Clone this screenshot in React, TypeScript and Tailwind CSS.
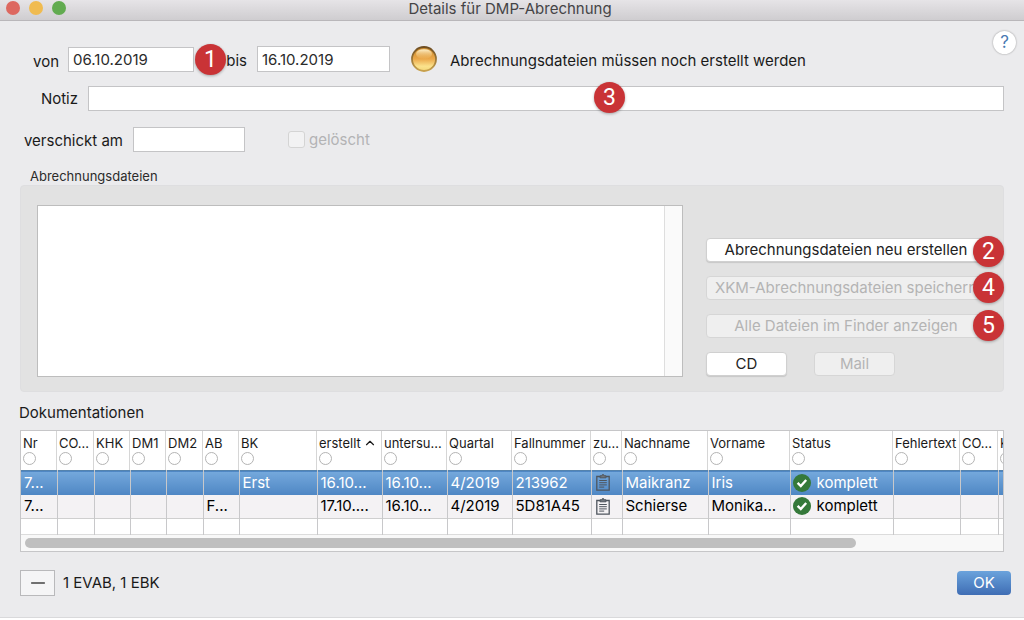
import { ChevronUp, Minus } from "lucide-react";
import clsx from "clsx";

type Column = { label: string; width: string; sorted?: boolean };

const columns: Column[] = [
  { label: "Nr", width: "w-[36px]" },
  { label: "CO...", width: "w-[37px]" },
  { label: "KHK", width: "w-[36px]" },
  { label: "DM1", width: "w-[36px]" },
  { label: "DM2", width: "w-[37px]" },
  { label: "AB", width: "w-[36px]" },
  { label: "BK", width: "w-[78px]" },
  { label: "erstellt", width: "w-[65px]", sorted: true },
  { label: "untersu...", width: "w-[65px]" },
  { label: "Quartal", width: "w-[65px]" },
  { label: "Fallnummer", width: "w-[79px]" },
  { label: "zu...", width: "w-[31px]" },
  { label: "Nachname", width: "w-[86px]" },
  { label: "Vorname", width: "w-[82px]" },
  { label: "Status", width: "w-[103px]" },
  { label: "Fehlertext", width: "w-[67px]" },
  { label: "CO...", width: "w-[38px]" },
  { label: "KHK", width: "w-[36px]" },
];

const rows = [
  ["7...", "", "", "", "", "", "Erst", "16.10...", "16.10...", "4/2019", "213962", "clip", "Maikranz", "Iris", "komplett", "", "", ""],
  ["7...", "", "", "", "", "F...", "", "17.10....", "16.10...", "4/2019", "5D81A45", "clip", "Schierse", "Monika...", "komplett", "", "", ""],
];

function Badge({ children, className }: { children: string; className: string }) {
  return (
    <span
      className={clsx(
        "absolute z-10 flex size-[31px] items-center justify-center rounded-full bg-[#c93336] font-['Roboto',sans-serif] text-[23px] leading-none text-white shadow-[0_1px_3px_rgba(0,0,0,0.3)]",
        className,
      )}
    >
      {children}
    </span>
  );
}

function ClipboardIcon() {
  return (
    <svg viewBox="0 0 14 17" className="ml-px h-[17px] w-[14px]" fill="none" stroke="#4f565e">
      <path d="M4 2.5H.8v13.7h12.4V2.5H10" strokeWidth="1.3" />
      <path d="M4 1.8h1.8a1.2 1.2 0 0 1 2.4 0H10v2H4z" fill="#70767c" />
      <path d="M3.2 6.5h7.6M3.2 8.7h7.6M3.2 10.9h7.6M3.2 13.1h5" />
    </svg>
  );
}

function CheckIcon() {
  return (
    <svg viewBox="0 0 18 18" className="size-[18px] shrink-0">
      <circle cx="9" cy="9" r="9" fill="#35793a" />
      <path d="M4.6 8.8l3.2 3.2 5.4-6" fill="none" stroke="#fff" strokeWidth="2.4" />
    </svg>
  );
}

function StatusLamp() {
  return (
    <svg viewBox="0 0 26 26" className="size-[26px]" role="img" aria-label="Status: offen">
      <defs>
        <linearGradient id="rim" x1="0" y1="0" x2="0" y2="1">
          <stop offset="0" stopColor="#6e4d22" />
          <stop offset="1" stopColor="#c9a24e" />
        </linearGradient>
        <linearGradient id="lamp" x1="0" y1="0" x2="0" y2="1">
          <stop offset="0" stopColor="#c98a2c" />
          <stop offset="0.5" stopColor="#eba84a" />
          <stop offset="0.8" stopColor="#fbe28c" />
          <stop offset="1" stopColor="#f3d778" />
        </linearGradient>
        <linearGradient id="shine" x1="0" y1="0" x2="0" y2="1">
          <stop offset="0" stopColor="#fff2cc" />
          <stop offset="1" stopColor="#f3bd66" stopOpacity="0.2" />
        </linearGradient>
      </defs>
      <circle cx="13" cy="13" r="12" fill="url(#lamp)" stroke="url(#rim)" strokeWidth="1.8" />
      <ellipse cx="13" cy="8" rx="8" ry="4.8" fill="url(#shine)" />
    </svg>
  );
}

const field = "border border-[#c4c4c6] bg-white px-1 text-[15px] text-[#2b2b2b] outline-none";
const button =
  "h-[24px] rounded-[4px] border border-[#d0d0d0] bg-white text-[15px] leading-[20px] text-[#222] shadow-[0_1px_1px_rgba(0,0,0,0.12)] disabled:border-[#d6d6d6] disabled:bg-[#efefef] disabled:text-[#b4b4b4] disabled:shadow-none";

export default function App() {
  return (
    <div className="flex flex-col overflow-hidden border-b border-[#d9d9db] bg-[#ebebed] font-['Inter',sans-serif] text-[15px] leading-[20px] text-[#1a1a1a]">
      <header className="flex h-[21px] items-start border-b border-[#b9b7ba] bg-linear-to-b from-[#e6e4e7] to-[#cfcdd0]">
        <div className="flex w-[68px] gap-[9px] pt-px pl-[6px]">
          <span className="size-[14px] rounded-full bg-[#dd6860]" />
          <span className="size-[14px] rounded-full bg-[#f0bb50]" />
          <span className="size-[14px] rounded-full bg-[#62ab50]" />
        </div>
        <h1 className="flex-1 text-center leading-[18px] text-[#454446]">Details für DMP-Abrechnung</h1>
        <div className="w-[72px]" />
      </header>

      <main className="flex flex-col pt-[10px] pr-[20px] pb-[21px] pl-[20px]">
        {/* Zeitraum */}
        <div className="-mr-[12px] flex h-[41px] items-end">
          <label htmlFor="von" className="w-[48px] pr-[9px] text-right">von</label>
          <div className="relative">
            <input id="von" defaultValue="06.10.2019" className={clsx(field, "h-[25px] w-[126px]")} />
            <Badge className="-top-[3px] left-[127px]">1</Badge>
          </div>
          <label htmlFor="bis" className="w-[63px] pr-[10px] pb-px text-right">bis</label>
          <input id="bis" defaultValue="16.10.2019" className={clsx(field, "h-[26px] w-[133px]")} />
          <div className="ml-[21px]">
            <StatusLamp />
          </div>
          <p className="ml-[13px] pb-px">Abrechnungsdateien müssen noch erstellt werden</p>
          <button
            type="button"
            className="ml-auto size-[23px] self-start rounded-full bg-white text-[17px] leading-none text-[#4779b2] shadow-[0_0_2px_rgba(0,0,0,0.4)]"
          >
            ?
          </button>
        </div>

        <div className="mt-[14px] flex items-center">
          <label htmlFor="notiz" className="w-[68px] pr-[10px] text-right">Notiz</label>
          <div className="relative flex flex-1">
            <input id="notiz" className={clsx(field, "h-[25px] flex-1")} />
            <Badge className="-top-[4px] left-[506px]">3</Badge>
          </div>
        </div>

        <div className="mt-[16px] flex items-center">
          <label htmlFor="verschickt" className="w-[113px] pt-[2px] pr-[10px] text-right whitespace-nowrap">verschickt am</label>
          <input id="verschickt" className={clsx(field, "h-[25px] w-[112px]")} />
          <input
            id="geloescht"
            type="checkbox"
            disabled
            className="ml-[43px] size-[17px] appearance-none rounded-[3px] border border-[#d4d4d4] bg-[#f2f2f3]"
          />
          <label htmlFor="geloescht" className="pl-[4px] text-[#b3b3b5]">gelöscht</label>
        </div>

        {/* Abrechnungsdateien */}
        <label htmlFor="dateien" className="mt-[16px] pl-[10px] text-[13px] leading-[17px] text-[#2b2b2b]">
          Abrechnungsdateien
        </label>
        <section className="flex h-[207px] gap-[23px] rounded-[4px] border border-[#dedee0] bg-[#e2e2e2] pt-[19px] pr-[17px] pl-[16px]">
          <div className="flex h-[172px] flex-1 border border-[#bdbdbd] bg-white">
            <textarea id="dateien" className="flex-1 resize-none outline-none" />
            <div className="w-[18px] border-l border-[#dedede] bg-[#fafafa]" />
          </div>
          <div className="flex w-[280px] flex-col gap-[14px] pt-[33px]">
            <div className="relative flex">
              <button type="button" className={clsx(button, "flex-1")}>Abrechnungsdateien neu erstellen</button>
              <Badge className="-top-[2px] -right-[18px]">2</Badge>
            </div>
            <div className="relative flex">
              <button type="button" disabled className={clsx(button, "flex-1")}>XKM-Abrechnungsdateien speichern</button>
              <Badge className="-top-[4px] -right-[18px]">4</Badge>
            </div>
            <div className="relative flex">
              <button type="button" disabled className={clsx(button, "flex-1")}>Alle Dateien im Finder anzeigen</button>
              <Badge className="-top-[4px] -right-[18px]">5</Badge>
            </div>
            <div className="flex gap-[27px]">
              <button type="button" className={clsx(button, "w-[81px]")}>CD</button>
              <button type="button" disabled className={clsx(button, "w-[81px]")}>Mail</button>
            </div>
          </div>
        </section>

        {/* Dokumentationen */}
        <h2 className="mt-[11px] -ml-px leading-[19px]">Dokumentationen</h2>
        <div className="mt-[8px] overflow-hidden border border-[#c6c6c8] bg-white">
          <table className="w-[1013px] table-fixed border-collapse">
            <thead>
              <tr className="h-[39px]">
                {columns.map((col, i) => (
                  <th key={i} className={clsx(col.width, "p-0 text-left align-top font-normal")}>
                    <div className="flex h-[39px] flex-col border-r border-[#d6d6d6] pt-[3px] pl-[2px]">
                      <span className="flex items-center text-[13px] leading-[18px] whitespace-nowrap">
                        {col.label}
                        {col.sorted && <ChevronUp className="ml-[2px] size-[14px] shrink-0" strokeWidth={2} />}
                      </span>
                      <input
                        type="radio"
                        name="suchspalte"
                        aria-label={col.label}
                        className="size-[13px] shrink-0 appearance-none rounded-full border border-[#b4b4b4] bg-white"
                      />
                    </div>
                  </th>
                ))}
              </tr>
            </thead>
            <tbody>
              {rows.map((row, r) => (
                <tr
                  key={r}
                  className={clsx(
                    "h-[24px]",
                    r === 0
                      ? "border-t border-[#5583ad] bg-linear-to-b from-[#74a8dc] to-[#4f87c4] text-white"
                      : "border-b border-[#cfcfcf] bg-[#f4f2f4] text-black",
                  )}
                >
                  {row.map((cell, i) => (
                    <td key={i} className="overflow-hidden border-r border-[#c8c8ca] p-0 pl-[3px] whitespace-nowrap">
                      {cell === "clip" ? (
                        <ClipboardIcon />
                      ) : cell === "komplett" ? (
                        <div className="-ml-px flex items-center gap-[6px]">
                          <CheckIcon />
                          {cell}
                        </div>
                      ) : (
                        cell
                      )}
                    </td>
                  ))}
                </tr>
              ))}
              <tr className="h-[16px] border-b border-[#dcdcdc]">
                {columns.map((_, i) => (
                  <td key={i} className="border-r border-[#c8c8ca] p-0" />
                ))}
              </tr>
            </tbody>
          </table>
          <div className="h-[16px] bg-[#f8f8f8] pt-[3px] pl-[4px]">
            <div className="h-[10px] w-[85%] rounded-full bg-[#bfbfbf]" />
          </div>
        </div>

        <footer className="-mr-[7px] mt-[18px] flex items-center">
          <button
            type="button"
            aria-label="Entfernen"
            className="flex h-[26px] w-[35px] items-center justify-center border border-[#b9b9bb] bg-[#f5f5f6]"
          >
            <Minus className="size-[22px] text-[#444]" strokeWidth={1.4} />
          </button>
          <p className="ml-[8px]">1 EVAB, 1 EBK</p>
          <button
            type="button"
            className="ml-auto h-[24px] w-[54px] rounded-[4px] bg-linear-to-b from-[#6ba3dc] to-[#3f6db4] text-[15px] leading-[24px] text-white"
          >
            OK
          </button>
        </footer>
      </main>
    </div>
  );
}
